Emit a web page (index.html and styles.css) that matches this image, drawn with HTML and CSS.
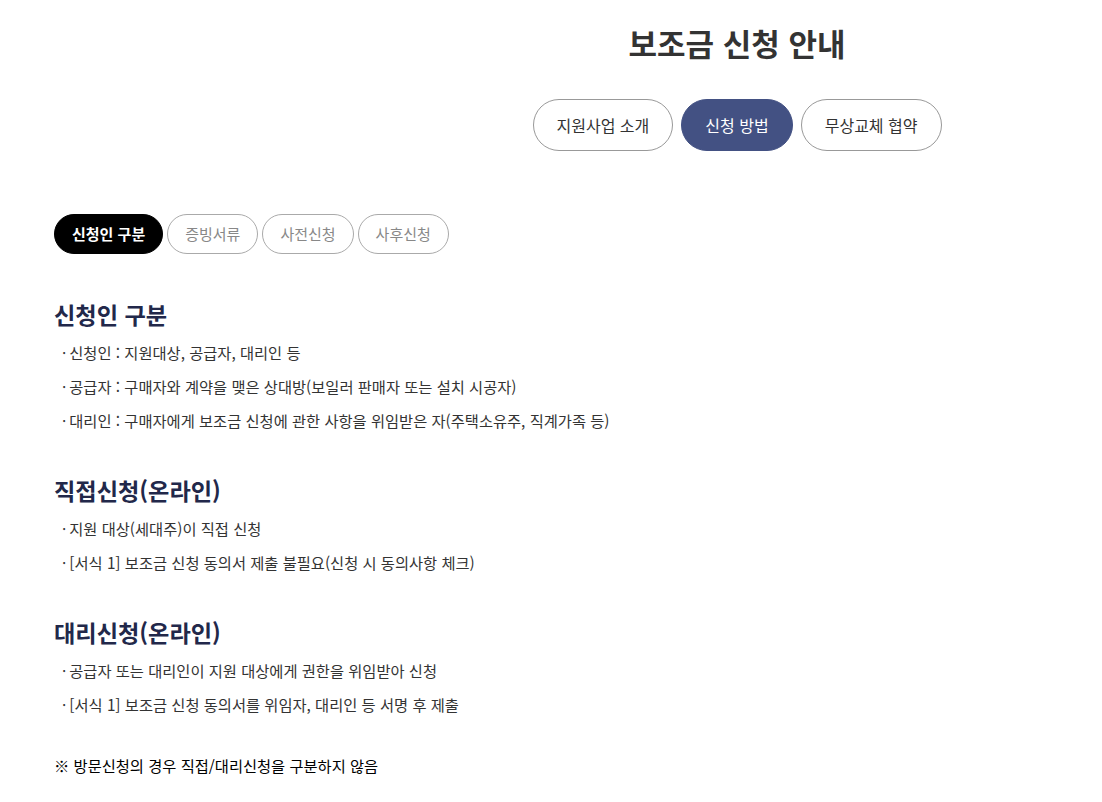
FILE: index.html
```html
<!DOCTYPE html>
<html lang="ko">

<head>
    <meta charset="UTF-8">
    <meta name="viewport" content="width=device-width, initial-scale=1.0">
    <title>보조금 신청 안내</title>

    <link rel="stylesheet" href="styles.css">

</head>

<body>

    <header class="top">
        <h1 class="title">보조금 신청 안내</h1>

        <nav class="main-tabs">
            <a href="#" class="main-tab">지원사업 소개</a>
            <a href="#" class="main-tab on">신청 방법</a>
            <a href="#" class="main-tab">무상교체 협약</a>
        </nav>
    </header>

    <section class="content">

        <div class="sub-tabs">
            <a href="#" class="sub-tab on">신청인 구분</a>
            <a href="#" class="sub-tab">증빙서류</a>
            <a href="#" class="sub-tab">사전신청</a>
            <a href="#" class="sub-tab">사후신청</a>
        </div>

        <div class="block">
            <h2>신청인 구분</h2>
            <ul>
                <li>신청인 : 지원대상, 공급자, 대리인 등</li>
                <li>공급자 : 구매자와 계약을 맺은 상대방(보일러 판매자 또는 설치 시공자)</li>
                <li>대리인 : 구매자에게 보조금 신청에 관한 사항을 위임받은 자(주택소유주, 직계가족 등)</li>
            </ul>
        </div>

        <div class="block">
            <h2>직접신청(온라인)</h2>
            <ul>
                <li>지원 대상(세대주)이 직접 신청</li>
                <li>[서식 1] 보조금 신청 동의서 제출 불필요(신청 시 동의사항 체크)</li>
            </ul>
        </div>

        <div class="block">
            <h2>대리신청(온라인)</h2>
            <ul>
                <li>공급자 또는 대리인이 지원 대상에게 권한을 위임받아 신청</li>
                <li>[서식 1] 보조금 신청 동의서를 위임자, 대리인 등 서명 후 제출</li>
            </ul>
        </div>

        <p class="note">※ 방문신청의 경우 직접/대리신청을 구분하지 않음</p>

    </section>

</body>

</html>
```

FILE: styles.css
```css
body {
    margin: 0;
    background-color: #fff;
    color: #333;
    font-family: "Noto Sans CJK KR", "Noto Sans", sans-serif;
}

a {
    text-decoration: none;
}

.top {
    padding: 20px 0 0 372px;
    text-align: center;
}

.title {
    margin: 0;
    font-size: 31px;
    line-height: 46px;
    font-weight: 700;
    color: #333;
}

.main-tabs {
    display: flex;
    justify-content: center;
    gap: 8px;
    margin-top: 33px;
}

.main-tab {
    display: block;
    padding: 0 23px;
    height: 50px;
    line-height: 50px;
    border: 1px solid #999;
    border-radius: 26px;
    font-size: 16px;
    color: #333;
}

.main-tab.on {
    border-color: #435183;
    background-color: #435183;
    color: #fff;
}

.content {
    padding: 63px 0 0 54px;
}

.sub-tabs {
    display: flex;
    gap: 4px;
}

.sub-tab {
    display: block;
    padding: 0 17px;
    height: 38px;
    line-height: 38px;
    border: 1px solid #aaa;
    border-radius: 20px;
    font-size: 15px;
    color: #888;
}

.sub-tab.on {
    border-color: #000;
    background-color: #000;
    color: #fff;
    font-weight: 700;
}

.block {
    margin-top: 42px;
}

.block+.block {
    margin-top: 35px;
}

h2 {
    margin: 0;
    font-size: 23.2px;
    line-height: 36px;
    font-weight: 700;
    color: #22284a;
}

ul {
    margin: 0;
    padding: 3px 0 0 8px;
    list-style: none;
}

li {
    font-size: 15.3px;
    line-height: 34px;
    color: #333;
}

li::before {
    content: "·";
    margin-right: 3px;
}

.note {
    margin: 32px 0 0 0;
    font-size: 15.3px;
    line-height: 24px;
    color: #000;
}
```
